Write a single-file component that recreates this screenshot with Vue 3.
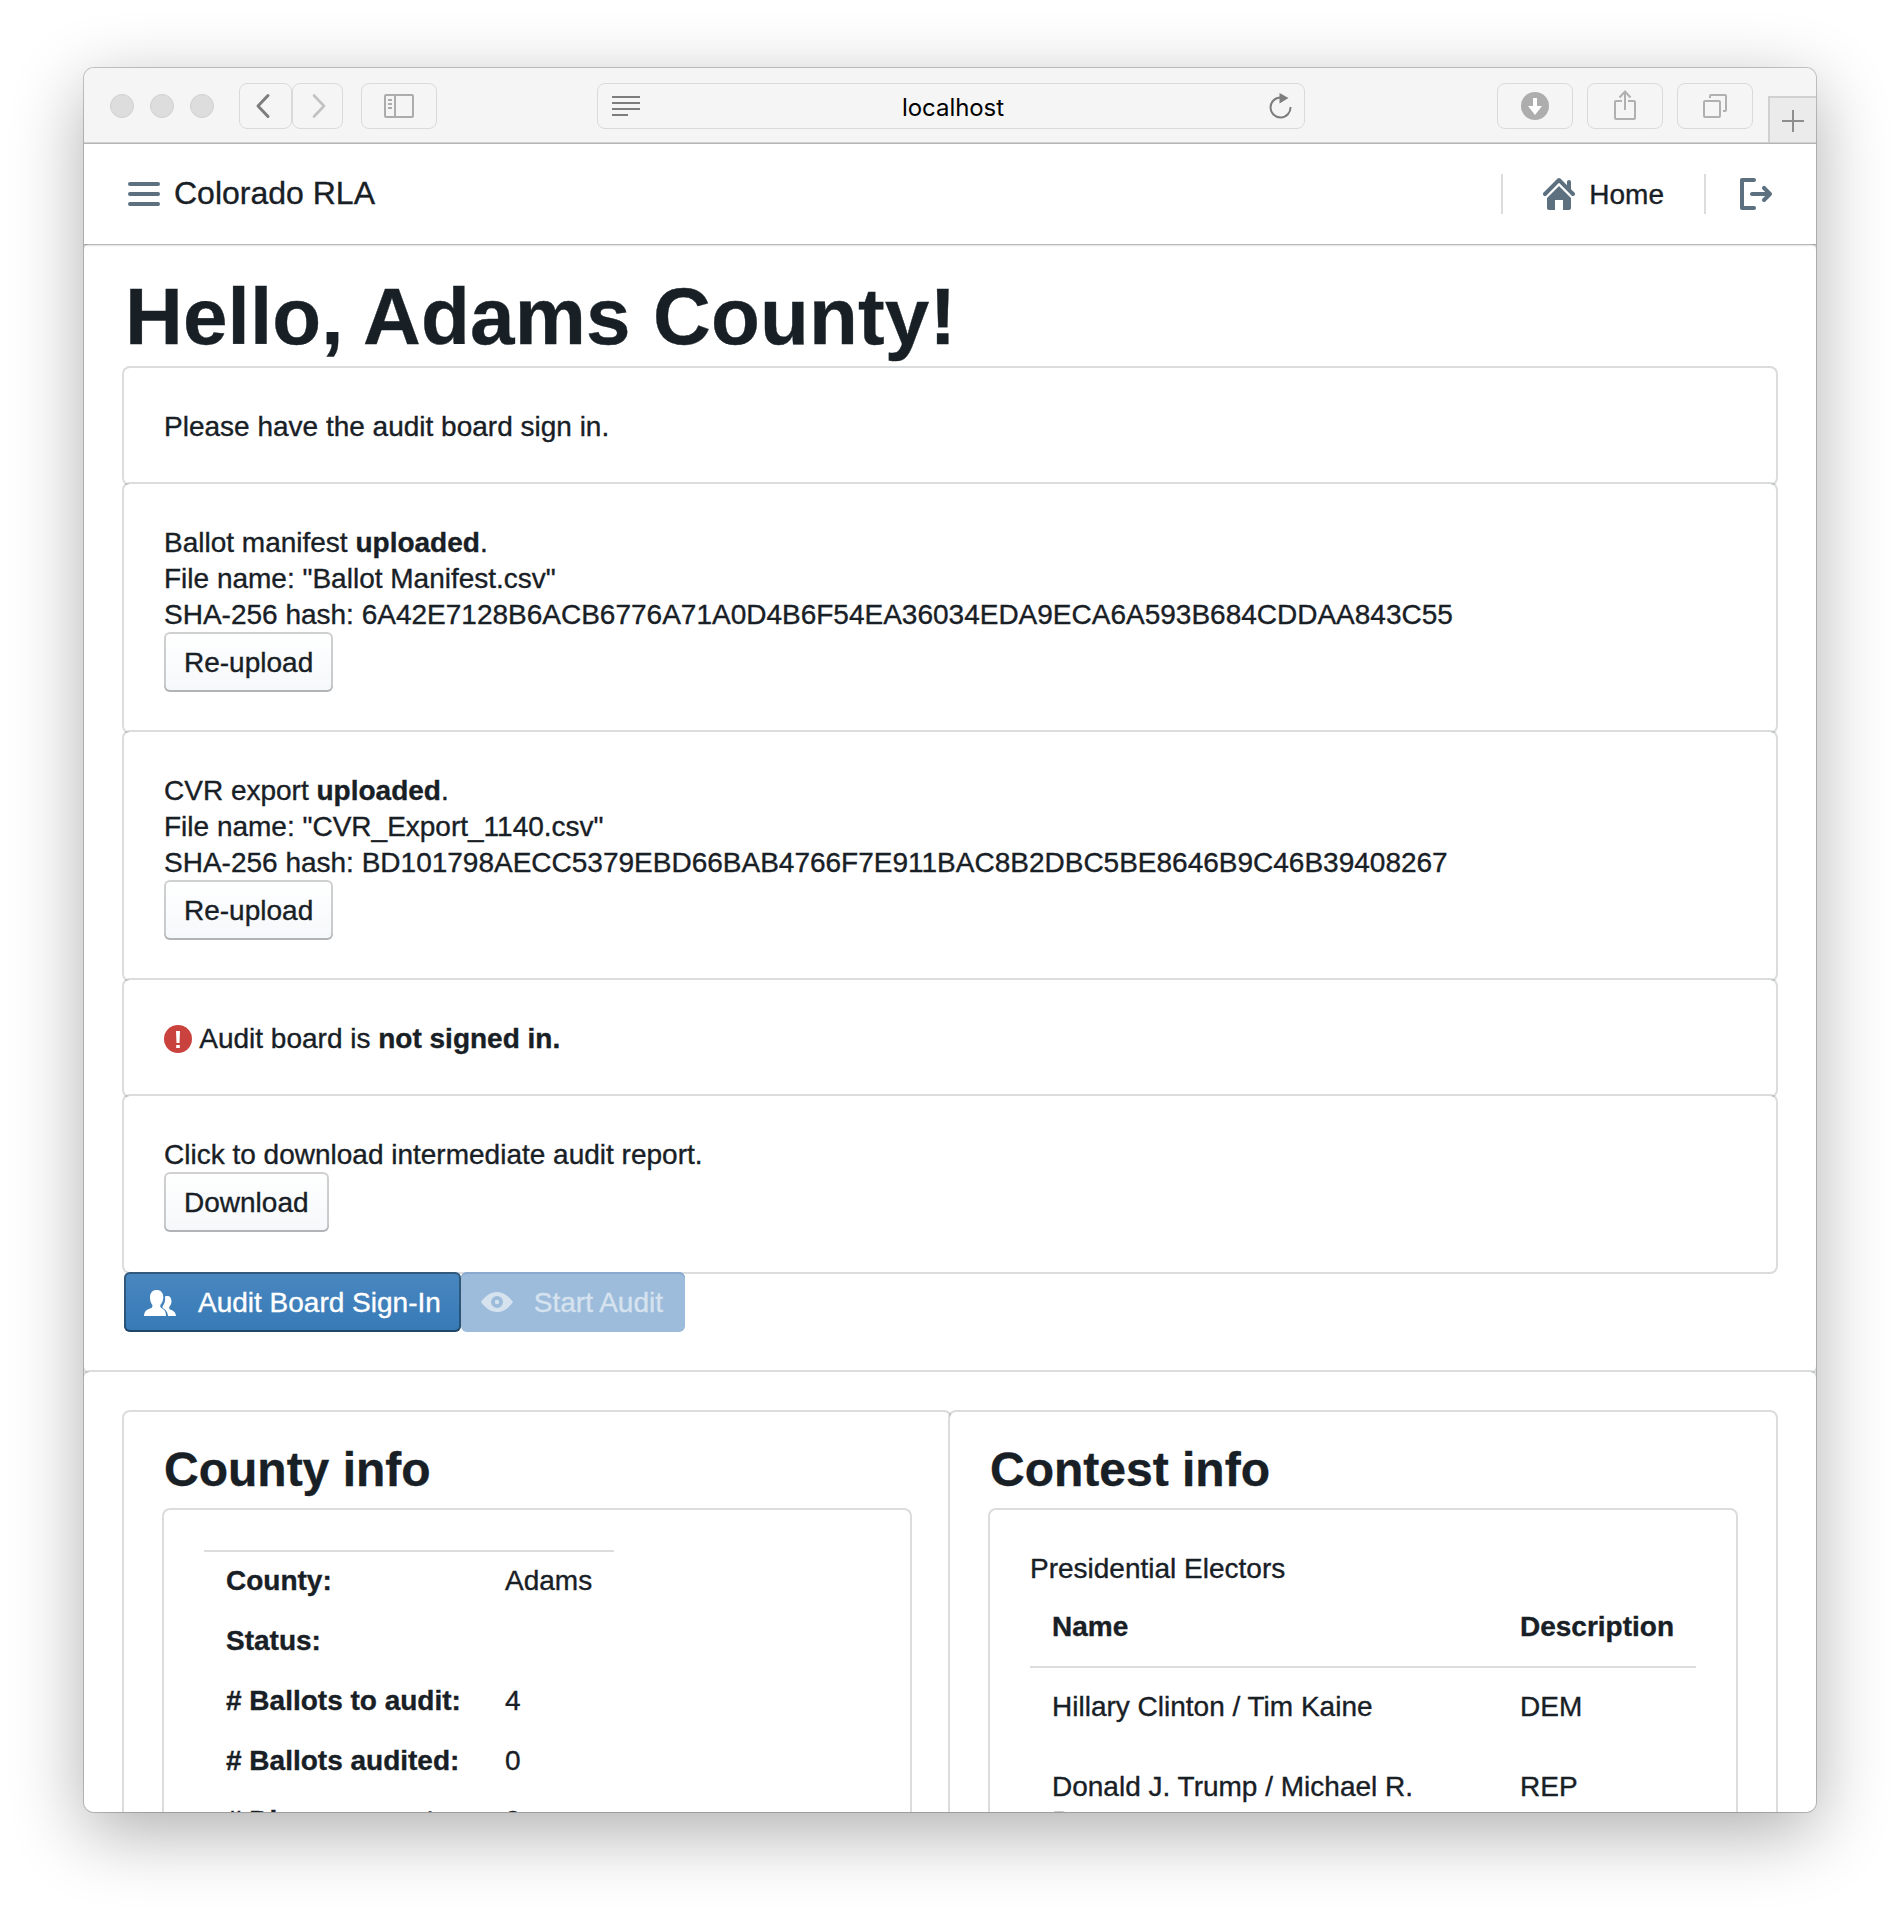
<script setup>
const lights = [1, 2, 3]
const uploads = [
  {
    label: 'Ballot manifest',
    file: 'Ballot Manifest.csv',
    hash: '6A42E7128B6ACB6776A71A0D4B6F54EA36034EDA9ECA6A593B684CDDAA843C55',
  },
  {
    label: 'CVR export',
    file: 'CVR_Export_1140.csv',
    hash: 'BD101798AECC5379EBD66BAB4766F7E911BAC8B2DBC5BE8646B9C46B39408267',
  },
]
const county = [
  ['County:', 'Adams'],
  ['Status:', ''],
  ['# Ballots to audit:', '4'],
  ['# Ballots audited:', '0'],
  ['# Disagreements:', '0'],
]
const choices = [
  ['Hillary Clinton / Tim Kaine', 'DEM'],
  ['Donald J. Trump / Michael R. Pence', 'REP'],
]
</script>

<template>
  <div class="desktop">
    <div class="window">
      <header class="toolbar">
        <div class="lights"><i v-for="n in lights" :key="n"></i></div>
        <div class="history">
          <span class="tool back">
            <svg width="16" height="26" viewBox="0 0 16 26"><path d="M13 2.500L3 13l10 10.500" fill="none" stroke="#7d7d7d" stroke-width="3" stroke-linecap="round" stroke-linejoin="round" /></svg>
          </span>
          <span class="tool forward">
            <svg width="16" height="26" viewBox="0 0 16 26"><path d="M3 2.500L13 13L3 23.500" fill="none" stroke="#c2c2c2" stroke-width="2.600" stroke-linecap="round" stroke-linejoin="round" /></svg>
          </span>
        </div>
        <span class="tool wide sidebar">
          <svg width="30" height="24" viewBox="0 0 30 24" fill="none" stroke="#acacac" stroke-width="2"><rect x="1" y="1" width="28" height="22" rx="1" /><path d="M11 1v22M4 6h4M4 10h4M4 14h4" /></svg>
        </span>
        <div class="address">
          <svg width="28" height="20" viewBox="0 0 28 20" stroke="#7d7d7d" stroke-width="2"><path d="M0 1h28M0 7h28M0 13h28M0 19h16" /></svg>
          <span class="host">localhost</span>
          <svg width="24" height="26" viewBox="0 0 24 26"><path d="M11.500 4.500A10 10 0 1 0 21.500 14" fill="none" stroke="#7d7d7d" stroke-width="2" /><path d="M10.500 0l9 5-9 5.500z" fill="#7d7d7d" /></svg>
        </div>
        <div class="actions">
          <span class="tool wide">
            <svg width="28" height="28" viewBox="0 0 28 28"><circle cx="14" cy="14" r="14" fill="#adadad" /><path d="M12 6h4v8h5l-7 9-7-9h5z" fill="#fff" /></svg>
          </span>
          <span class="tool wide">
            <svg class="share" width="24" height="30" viewBox="0 0 24 30" fill="none" stroke="#b0b0b0" stroke-width="2"><path d="M9 11H3a1 1 0 0 0-1 1v16a1 1 0 0 0 1 1h18a1 1 0 0 0 1-1V12a1 1 0 0 0-1-1H15M12 20V2M6.500 7.500L12 1.500l5.500 6" /></svg>
          </span>
          <span class="tool wide">
            <svg width="24" height="24" viewBox="0 0 24 24" fill="none" stroke="#b0b0b0" stroke-width="2"><rect x="1" y="7" width="16" height="16" rx="1" /><path d="M7 4V2a1 1 0 0 1 1-1h14a1 1 0 0 1 1 1v14a1 1 0 0 1-1 1h-2" /></svg>
          </span>
        </div>
        <span class="new-tab">
          <svg width="22" height="22" viewBox="0 0 22 22" stroke="#8e8e8e" stroke-width="2"><path d="M11 0v22M0 11h22" /></svg>
        </span>
      </header>

      <nav class="navbar">
        <svg class="menu" width="32" height="24" viewBox="0 0 32 24" fill="#5c7080"><rect width="32" height="4" rx="2" /><rect y="10" width="32" height="4" rx="2" /><rect y="20" width="32" height="4" rx="2" /></svg>
        <span class="brand">Colorado RLA</span>
        <span class="divider"></span>
        <a class="home">
          <svg width="32" height="32" viewBox="0 0 16 16" fill="#5c7080"><path d="M2 10v5c0 .55.45 1 1 1h3v-5h4v5h3c.55 0 1-.45 1-1v-5L8 4l-6 6zm13.710-2.710L14 5.590V2c0-.55-.45-1-1-1s-1 .45-1 1v1.590L8.710.29C8.530.11 8.280 0 8 0s-.53.11-.71.29l-7 7a1.003 1.003 0 0 0 1.420 1.420L8 2.410l6.290 6.290c.18.19.43.3.71.3a1.003 1.003 0 0 0 .71-1.710z" /></svg>
          <span>Home</span>
        </a>
        <span class="divider"></span>
        <a class="logout">
          <svg width="32" height="32" viewBox="0 0 16 16" fill="#5c7080"><path d="M7 14H2V2h5c.55 0 1-.45 1-1s-.45-1-1-1H1C.45 0 0 .45 0 1v14c0 .55.45 1 1 1h6c.55 0 1-.45 1-1s-.45-1-1-1zm8.710-6.710l-3-3a1.003 1.003 0 0 0-1.420 1.420L12.590 7H6c-.55 0-1 .45-1 1s.45 1 1 1h6.590l-1.290 1.290c-.19.18-.3.43-.3.71a1.003 1.003 0 0 0 1.710.71l3-3c.18-.18.29-.43.29-.71 0-.28-.11-.53-.29-.71z" /></svg>
        </a>
      </nav>

      <main>
        <section class="card outer">
          <h1>Hello, Adams County!</h1>
          <div class="card text">Please have the audit board sign in.</div>
          <div v-for="u in uploads" :key="u.hash" class="card text">
            <div>{{ u.label }} <strong>uploaded</strong>.</div>
            <div>File name: "{{ u.file }}"</div>
            <div>SHA-256 hash: {{ u.hash }}</div>
            <button class="btn">Re-upload</button>
          </div>
          <div class="card text">
            <svg class="error" width="28" height="28" viewBox="0 0 28 28"><circle cx="14" cy="14" r="14" fill="#ca423e" /><path d="M12 6h4l-.5 12h-3zM12.200 20h3.600v3h-3.600z" fill="#fff" /></svg>
            Audit board is <strong>not signed in.</strong>
          </div>
          <div class="card text">
            <div>Click to download intermediate audit report.</div>
            <button class="btn">Download</button>
          </div>
          <div class="buttons">
            <button class="btn primary">
              <svg width="32" height="26" viewBox="0 0 32 26" fill="#fff"><path d="M12.700 0c4 0 6.600 2.600 6.600 7.500 0 3-1.300 5.500-3 7.500 0 1 0 2 .7 2.800 2.500 1.500 5 2.700 5 8.200H0c.3-5.500 3-6.300 7.500-8 .9-.8 1-2 .9-3C6.900 13 6 10.500 6 7.500 6 2.600 8.700 0 12.700 0z" /><path d="M21 6.500c.8-.4 1.600-.5 2.500-.5 2.500 0 4 2 4 5.500 0 2.200-1 4-2.300 5.500 0 1 0 1.600.5 2.200 2.300 1 6 2 6.300 6.800h-8c-.4-4-2-6-5.200-8-.6-.6-.4-1.300 0-2 1.800-2.800 2.800-5.500 2.200-9.500z" /></svg>
              <span>Audit Board Sign-In</span>
            </button>
            <button class="btn primary disabled" disabled>
              <svg width="32" height="20" viewBox="0 0 32 20"><path fill="#d6e3ef" fill-rule="evenodd" d="M16 0C9.600 0 4.300 4 0 10c4.300 6 9.600 10 16 10s11.700-4 16-10C27.700 4 22.400 0 16 0zm0 4a6 6 0 1 1 0 12 6 6 0 0 1 0-12z" /><circle cx="16" cy="10" r="2.200" fill="#d6e3ef" /></svg>
              <span>Start Audit</span>
            </button>
          </div>
        </section>

        <section class="card outer columns">
          <div class="card">
            <h2>County info</h2>
            <div class="card">
              <table class="county">
                <tbody>
                  <tr v-for="row in county" :key="row[0]">
                    <td><strong>{{ row[0] }}</strong></td>
                    <td>{{ row[1] }}</td>
                  </tr>
                </tbody>
              </table>
            </div>
          </div>
          <div class="card">
            <h2>Contest info</h2>
            <div class="card">
              <div class="contest-name">Presidential Electors</div>
              <table class="contest">
                <thead>
                  <tr><th>Name</th><th>Description</th></tr>
                </thead>
                <tbody>
                  <tr v-for="row in choices" :key="row[0]">
                    <td>{{ row[0] }}</td>
                    <td>{{ row[1] }}</td>
                  </tr>
                </tbody>
              </table>
            </div>
          </div>
        </section>
      </main>
    </div>
  </div>
</template>

<style>
body {
  background: #fff;
}
</style>

<style scoped>
.desktop {
  box-sizing: border-box;
  width: 1900px;
  height: 1912px;
  padding: 68px 84px 100px;
  overflow: hidden;
  background: #fff;
}
.window {
  display: flex;
  flex-direction: column;
  height: 1744px;
  border-radius: 10px;
  overflow: hidden;
  background: #fff;
  box-shadow: 0 0 0 1px rgba(0, 0, 0, 0.2), 0 20px 72px rgba(0, 0, 0, 0.32);
  color: #182026;
  font: 28px/36px "Liberation Sans", Arial, sans-serif;
  -webkit-text-stroke: 0.35px currentColor;
}
svg {
  display: block;
  flex: none;
}

.toolbar {
  display: flex;
  align-items: flex-start;
  flex: none;
  box-sizing: border-box;
  height: 76px;
  padding: 15px 0 0 26px;
  background: #f5f5f5;
  border-bottom: 2px solid #d0d0d0;
}
.lights {
  display: flex;
  gap: 16px;
  margin-top: 11px;
}
.lights i {
  box-sizing: border-box;
  width: 24px;
  height: 24px;
  border: 1px solid #d0d0d0;
  border-radius: 50%;
  background: #dddddd;
}
.history {
  display: flex;
  margin-left: 25px;
}
.tool,
.address {
  display: flex;
  align-items: center;
  justify-content: center;
  box-sizing: border-box;
  height: 46px;
  border: 1px solid #dadada;
  border-radius: 8px;
}
.back {
  width: 53px;
  padding-right: 5px;
}
.forward {
  width: 51px;
  padding-left: 2px;
}
.wide {
  width: 76px;
}
.sidebar {
  margin-left: 18px;
}
.address {
  width: 708px;
  margin-left: 160px;
  padding: 0 11px 0 14px;
  justify-content: space-between;
  color: #000;
  font: 24px/36px Inter, sans-serif;
  -webkit-text-stroke: 0;
}
.host {
  padding: 3px 3px 0 0;
  letter-spacing: -0.05px;
}
.actions {
  display: flex;
  gap: 14px;
  margin-left: 192px;
}
.share {
  margin-top: -2px;
}
.new-tab {
  display: flex;
  align-items: center;
  justify-content: center;
  box-sizing: border-box;
  width: 48px;
  height: 46px;
  margin: 13px 0 0 auto;
  padding-top: 2px;
  border-top: 2px solid #d0d0d0;
  border-left: 2px solid #d0d0d0;
  background: #ebebeb;
}

.navbar {
  position: relative;
  z-index: 1;
  display: flex;
  align-items: center;
  flex: none;
  box-sizing: border-box;
  height: 100px;
  padding: 0 44px;
  background: #fff;
  box-shadow: 0 0 0 1px rgba(16, 22, 26, 0.12), 0 1px 2px rgba(16, 22, 26, 0.3);
}
.brand {
  margin-left: 14px;
  margin-right: auto;
  padding-bottom: 2px;
  font-size: 32px;
}
.divider {
  width: 2px;
  height: 40px;
  background: #dbdcdd;
}
.home {
  display: flex;
  align-items: center;
  gap: 14px;
  padding: 0 40px;
}
.home span {
  padding-top: 2px;
}
.logout {
  margin-left: 34px;
}

main {
  flex: 1;
  min-height: 0;
}
.card {
  padding: 40px;
  border-radius: 6px;
  background: #fff;
  box-shadow: 0 0 0 2px rgba(16, 22, 26, 0.15);
}
.text {
  padding: 41px 40px 39px;
}
h1 {
  margin: 0 0 20px;
  padding: 1px 0 0 1px;
  font-size: 80px;
  line-height: 63px;
  letter-spacing: 0.15px;
}
h2 {
  margin: 0 0 23px;
  padding-top: 1px;
  font-size: 48px;
  line-height: 34px;
}
.btn {
  display: flex;
  align-items: center;
  box-sizing: border-box;
  height: 60px;
  padding: 2px 20px 0;
  border: 0;
  border-radius: 6px;
  background: linear-gradient(#fff, #f5f8fa);
  box-shadow: inset 0 0 0 2px rgba(16, 22, 26, 0.2), inset 0 -2px 0 rgba(16, 22, 26, 0.12);
  color: #182026;
  font: inherit;
}
.text .btn {
  margin: -1px 0 1px;
}
.buttons {
  display: flex;
  position: relative;
}
.primary {
  gap: 22px;
  background: linear-gradient(#4a87c0, #367ab6);
  box-shadow: inset 0 0 0 2px rgba(16, 22, 26, 0.4), inset 0 -2px 0 rgba(16, 22, 26, 0.2);
  color: #fff;
}
.primary.disabled {
  gap: 21px;
  padding-right: 22px;
  background: #9dbcdc;
  box-shadow: inset 0 2px 0 #8aa9ce;
  color: #d6e3ef;
}
.disabled svg {
  margin-top: -2px;
}
.error {
  display: inline-block;
  vertical-align: -3px;
  margin: -6px 1px -2px 0;
}
.columns {
  display: flex;
}
.columns > .card {
  box-sizing: border-box;
  flex: 1;
  height: 700px;
}
.columns > .card > .card {
  height: 600px;
}

table {
  border-collapse: collapse;
  table-layout: fixed;
}
td,
th {
  padding: 23px 22px 21px;
  text-align: left;
  vertical-align: top;
}
tbody tr:first-child td {
  box-shadow: inset 0 2px 0 #dbdcdd;
}
.county {
  width: 410px;
}
.county td {
  height: 36px;
  padding: 13px 22px 11px;
}
.county td:first-child {
  width: 257px;
  padding-right: 0;
  white-space: nowrap;
}
.contest-name {
  padding-top: 1px;
  line-height: 35px;
}
.contest {
  width: 666px;
}
.contest th:first-child {
  width: 424px;
}
.contest td {
  padding-bottom: 22px;
  line-height: 35px;
}
</style>
